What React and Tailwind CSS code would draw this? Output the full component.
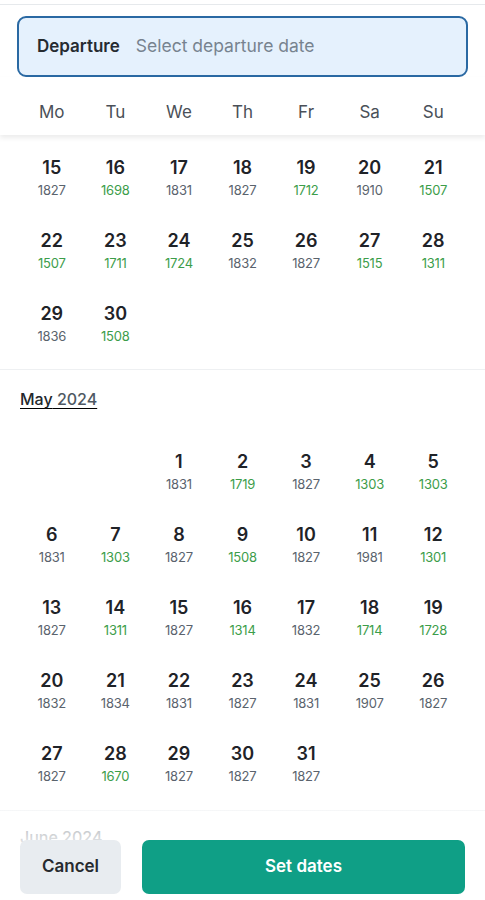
import React from 'react';

const april = [
  [15, 1827], [16, 1698], [17, 1831], [18, 1827], [19, 1712], [20, 1910], [21, 1507],
  [22, 1507], [23, 1711], [24, 1724], [25, 1832], [26, 1827], [27, 1515], [28, 1311],
  [29, 1836], [30, 1508],
];

const may = [
  null, null,
  [1, 1831], [2, 1719], [3, 1827], [4, 1303], [5, 1303],
  [6, 1831], [7, 1303], [8, 1827], [9, 1508], [10, 1827], [11, 1981], [12, 1301],
  [13, 1827], [14, 1311], [15, 1827], [16, 1314], [17, 1832], [18, 1714], [19, 1728],
  [20, 1832], [21, 1834], [22, 1831], [23, 1827], [24, 1831], [25, 1907], [26, 1827],
  [27, 1827], [28, 1670], [29, 1827], [30, 1827], [31, 1827],
];

const weekdays = ['Mo', 'Tu', 'We', 'Th', 'Fr', 'Sa', 'Su'];

const DayCell = ({ day }) => {
  if (!day) return <div className="h-[46px]" />;
  const [num, price] = day;
  const cheap = price < 1800;
  return (
    <div className="h-[46px] flex flex-col items-center">
      <span className="text-[18px] leading-[24px] font-semibold text-[#1f2328]">{num}</span>
      <span className={`text-[13px] leading-[20px] tracking-[-0.2px] ${cheap ? 'text-[#3c9d4a]' : 'text-[#5a636d]'}`}>{price}</span>
    </div>
  );
};

const MonthGrid = ({ days }) => (
  <div className="grid grid-cols-7 gap-y-[27px] px-5">
    {days.map((d, i) => (
      <DayCell key={i} day={d} />
    ))}
  </div>
);

export default function App() {
  return (
    <div className="relative w-full h-[900px] overflow-hidden bg-white font-['Inter',sans-serif] flex flex-col">
      {/* top strip */}
      <div className="h-[5px] border-b border-[#e6e9ec] shrink-0" />

      {/* departure input */}
      <div className="px-[17px] pt-[11px] shrink-0">
        <div className="h-[61px] rounded-[9px] border-2 border-[#2a69a3] bg-[#e5f1fd] flex items-center px-[18px] gap-[16px]">
          <span className="text-[17px] font-semibold text-[#262b31]">Departure</span>
          <span className="text-[17.5px] text-[#77838f]">Select departure date</span>
        </div>
      </div>

      {/* weekday header */}
      <div className="relative z-10 grid grid-cols-7 px-5 pt-[23px] h-[58px] shrink-0 shadow-[0_3px_5px_rgba(0,0,0,0.08)] bg-white">
        {weekdays.map((w) => (
          <span key={w} className="text-center text-[17px] leading-[24px] text-[#4a5058]">{w}</span>
        ))}
      </div>

      {/* calendar body */}
      <div className="flex-1 overflow-hidden">
        <div className="pt-[21px] pb-[21px] border-b border-[#eef0f2]">
          <MonthGrid days={april} />
        </div>

        <div className="pt-[17px] pb-[22px] border-b border-[#eef0f2]">
          <div className="px-5 text-[16px] leading-[24px] font-medium underline underline-offset-[3px]">
            <span className="text-[#23272c]">May</span>
            <span className="text-[#4f5963]"> 2024</span>
          </div>
          <div className="mt-[39px]">
            <MonthGrid days={may} />
          </div>
        </div>

        <div className="pt-[14px] px-5 text-[16px] leading-[24px] font-medium text-[#4f5963] underline underline-offset-[3px]">
          June 2024
        </div>
      </div>

      {/* footer buttons */}
      <div className="absolute bottom-0 left-0 right-0 px-5 pt-[34px] pb-[6px] bg-gradient-to-b from-white/40 via-white/95 to-white">
        <div className="flex gap-[21px]">
          <button className="w-[101px] h-[54px] rounded-[7px] bg-[#e8ecf0] text-[17px] font-semibold text-[#262a2e]">
            Cancel
          </button>
          <button className="flex-1 h-[54px] rounded-[7px] bg-[#0f9f86] text-[17px] font-semibold text-white">
            Set dates
          </button>
        </div>
      </div>
    </div>
  );
}
